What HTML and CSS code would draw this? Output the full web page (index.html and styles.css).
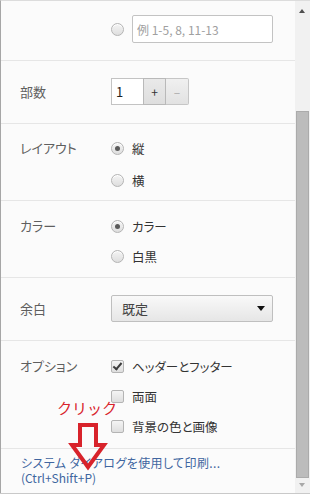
FILE: index.html
```html
<!DOCTYPE html>
<html lang="ja">
<head>
  <meta charset="UTF-8">
  <title>印刷</title>
  <link rel="stylesheet" href="styles.css">
</head>
<body>
  <div class="window">
    <main class="panel">
      <section class="row row--first">
        <div class="label"></div>
        <div class="controls">
          <label class="option option--field">
            <span class="radio"></span>
            <input class="pages" type="text" placeholder="例 1-5, 8, 11-13">
          </label>
        </div>
      </section>

      <section class="row row--center">
        <div class="label">部数</div>
        <div class="controls">
          <div class="copies">
            <span class="copies-value">1</span>
            <span class="copies-btn copies-btn--plus">+</span>
            <span class="copies-btn copies-btn--minus">–</span>
          </div>
        </div>
      </section>

      <section class="row row--list row--layout">
        <div class="label">レイアウト</div>
        <div class="controls">
          <label class="option"><span class="radio radio--checked"></span>縦</label>
          <label class="option"><span class="radio"></span>横</label>
        </div>
      </section>

      <section class="row row--list">
        <div class="label">カラー</div>
        <div class="controls">
          <label class="option"><span class="radio radio--checked"></span>カラー</label>
          <label class="option"><span class="radio"></span>白黒</label>
        </div>
      </section>

      <section class="row row--center">
        <div class="label">余白</div>
        <div class="controls">
          <div class="select">
            <span>既定</span>
            <span class="select-arrow"></span>
          </div>
        </div>
      </section>

      <section class="row row--list row--options">
        <div class="label">オプション</div>
        <div class="controls">
          <label class="option"><span class="check check--on"></span>ヘッダーとフッター</label>
          <label class="option"><span class="check"></span>両面</label>
          <label class="option"><span class="check"></span>背景の色と画像</label>
        </div>
      </section>

      <section class="system">
        <a class="system-link" href="#">
          <span class="system-line system-line--wide">システム ダイアログを使用して印刷...</span>
          <span class="system-line">(Ctrl+Shift+P)</span>
        </a>
      </section>

      <!-- annotation drawn over the dialog -->
      <div class="note">クリック</div>
      <svg class="note-arrow" width="46" height="56" viewBox="0 0 46 56" aria-hidden="true">
        <polygon points="14,6 30,6 30,26 38,26 22,48 6,26 14,26" fill="none" stroke="#d8232b" stroke-width="4" stroke-linejoin="miter"/>
      </svg>
    </main>

    <div class="scrollbar" aria-hidden="true">
      <span class="scroll-up"></span>
      <span class="scroll-thumb"></span>
      <span class="scroll-down"></span>
    </div>
  </div>
</body>
</html>
```

FILE: styles.css
```css
body {
  margin: 0;
  background: #fff;
  font-family: "Noto Sans CJK JP", "Noto Sans", sans-serif;
  font-size: 13px;
  font-feature-settings: "palt";
  color: #333;
}

.window {
  display: flex;
  width: 310px;
  height: 493px;
  border-bottom: 1px solid #c9c9c9;
  box-shadow: 0 1px 2px rgba(0, 0, 0, 0.15);
}

.panel {
  position: relative;
  flex: 1;
  background: #fbfbfb;
  border-left: 1px solid #a6a6a6;
  border-top: 1px solid #dcdcdc;
}

.row {
  display: flex;
  padding-left: 19px;
  border-bottom: 1px solid #e6e6e6;
}

.row--center {
  align-items: center;
  padding-top: 17px;
  padding-bottom: 18px;
}

.row--first {
  align-items: center;
  padding-top: 14px;
  padding-bottom: 17px;
}

.row--list {
  align-items: flex-start;
  padding-top: 15px;
  padding-bottom: 11px;
}

.row--layout {
  padding-top: 14px;
  padding-bottom: 10px;
}

.row--layout .controls {
  gap: 12px;
}

.row--options {
  padding-bottom: 12px;
}

.label {
  width: 91px;
  color: #5f5f5f;
  line-height: 20px;
}

.controls {
  display: flex;
  flex-direction: column;
  gap: 10px;
}

.option {
  display: flex;
  align-items: center;
  gap: 8px;
  height: 20px;
  font-size: 12.5px;
  color: #333;
}

.option--field {
  height: 28px;
}

.radio {
  width: 11px;
  height: 11px;
  border: 1px solid #b4b4b4;
  border-radius: 50%;
  background: linear-gradient(#f4f4f4, #dedede);
  box-shadow: inset 0 1px 0 #fff;
  display: flex;
  align-items: center;
  justify-content: center;
}

.radio--checked::after {
  content: "";
  width: 5px;
  height: 5px;
  border-radius: 50%;
  background: #5a5a5a;
}

.check {
  position: relative;
  width: 11px;
  height: 11px;
  border: 1px solid #b4b4b4;
  border-radius: 2px;
  background: linear-gradient(#f4f4f4, #dedede);
}

.check--on::after {
  content: "";
  position: absolute;
  left: 3px;
  top: 0;
  width: 3px;
  height: 7px;
  border: solid #3c3c3c;
  border-width: 0 2px 2px 0;
  transform: rotate(40deg);
}

.pages {
  box-sizing: border-box;
  width: 141px;
  height: 28px;
  margin: 0;
  padding: 0 4px;
  border: 1px solid #c3c3c3;
  border-radius: 2px;
  background: #fff;
  font-family: inherit;
  font-size: 12px;
}

.pages::placeholder {
  color: #a0a0a0;
}

.copies {
  display: flex;
  height: 27px;
}

.copies-value {
  box-sizing: border-box;
  width: 32px;
  padding-left: 4px;
  border: 1px solid #c3c3c3;
  border-right: 0;
  background: #fff;
  line-height: 25px;
  color: #222;
}

.copies-btn {
  box-sizing: border-box;
  width: 23px;
  border: 1px solid #c6c6c6;
  text-align: center;
  line-height: 25px;
  font-size: 12px;
  background: linear-gradient(#f0f0f0, #e2e2e2);
}

.copies-btn--plus {
  color: #333;
  border-color: #b9b9b9;
  background: linear-gradient(#e9e9e9, #dedede);
}

.copies-btn--minus {
  color: #a8a8a8;
  border-left: 0;
  border-radius: 0 2px 2px 0;
}

.select {
  box-sizing: border-box;
  display: flex;
  align-items: center;
  justify-content: space-between;
  width: 162px;
  height: 27px;
  padding: 0 7px 0 10px;
  border: 1px solid #bfbfbf;
  border-radius: 2px;
  background: linear-gradient(#f9f9f9, #e6e6e6);
  color: #444;
}

.select-arrow {
  width: 0;
  height: 0;
  border-left: 4px solid transparent;
  border-right: 4px solid transparent;
  border-top: 5px solid #111;
}

.system {
  padding: 6px 0 8px 20px;
}

.system-link {
  display: block;
  color: #4066a0;
  font-size: 12px;
  text-decoration: none;
}

.system-line {
  display: block;
  height: 15px;
  line-height: 15px;
}

.system-line--wide {
  letter-spacing: 0.4px;
}

.note {
  position: absolute;
  left: 56px;
  top: 397px;
  color: #d8232b;
  font-size: 15px;
  font-feature-settings: normal;
  line-height: 20px;
}

.note-arrow {
  position: absolute;
  left: 65px;
  top: 418px;
}

.scrollbar {
  position: relative;
  width: 15px;
  background: #f1f1f1;
  border-top: 1px solid #dcdcdc;
}

.scroll-up,
.scroll-down {
  position: absolute;
  left: 4px;
  width: 0;
  height: 0;
  border-left: 3px solid transparent;
  border-right: 3px solid transparent;
}

.scroll-up {
  top: 8px;
  border-bottom: 4px solid #505050;
}

.scroll-down {
  bottom: 6px;
  border-top: 4px solid #a8a8a8;
}

.scroll-thumb {
  position: absolute;
  left: 1px;
  top: 110px;
  width: 11px;
  height: 365px;
  background: #bcbcbc;
  border: 1px solid #ababab;
}
```
